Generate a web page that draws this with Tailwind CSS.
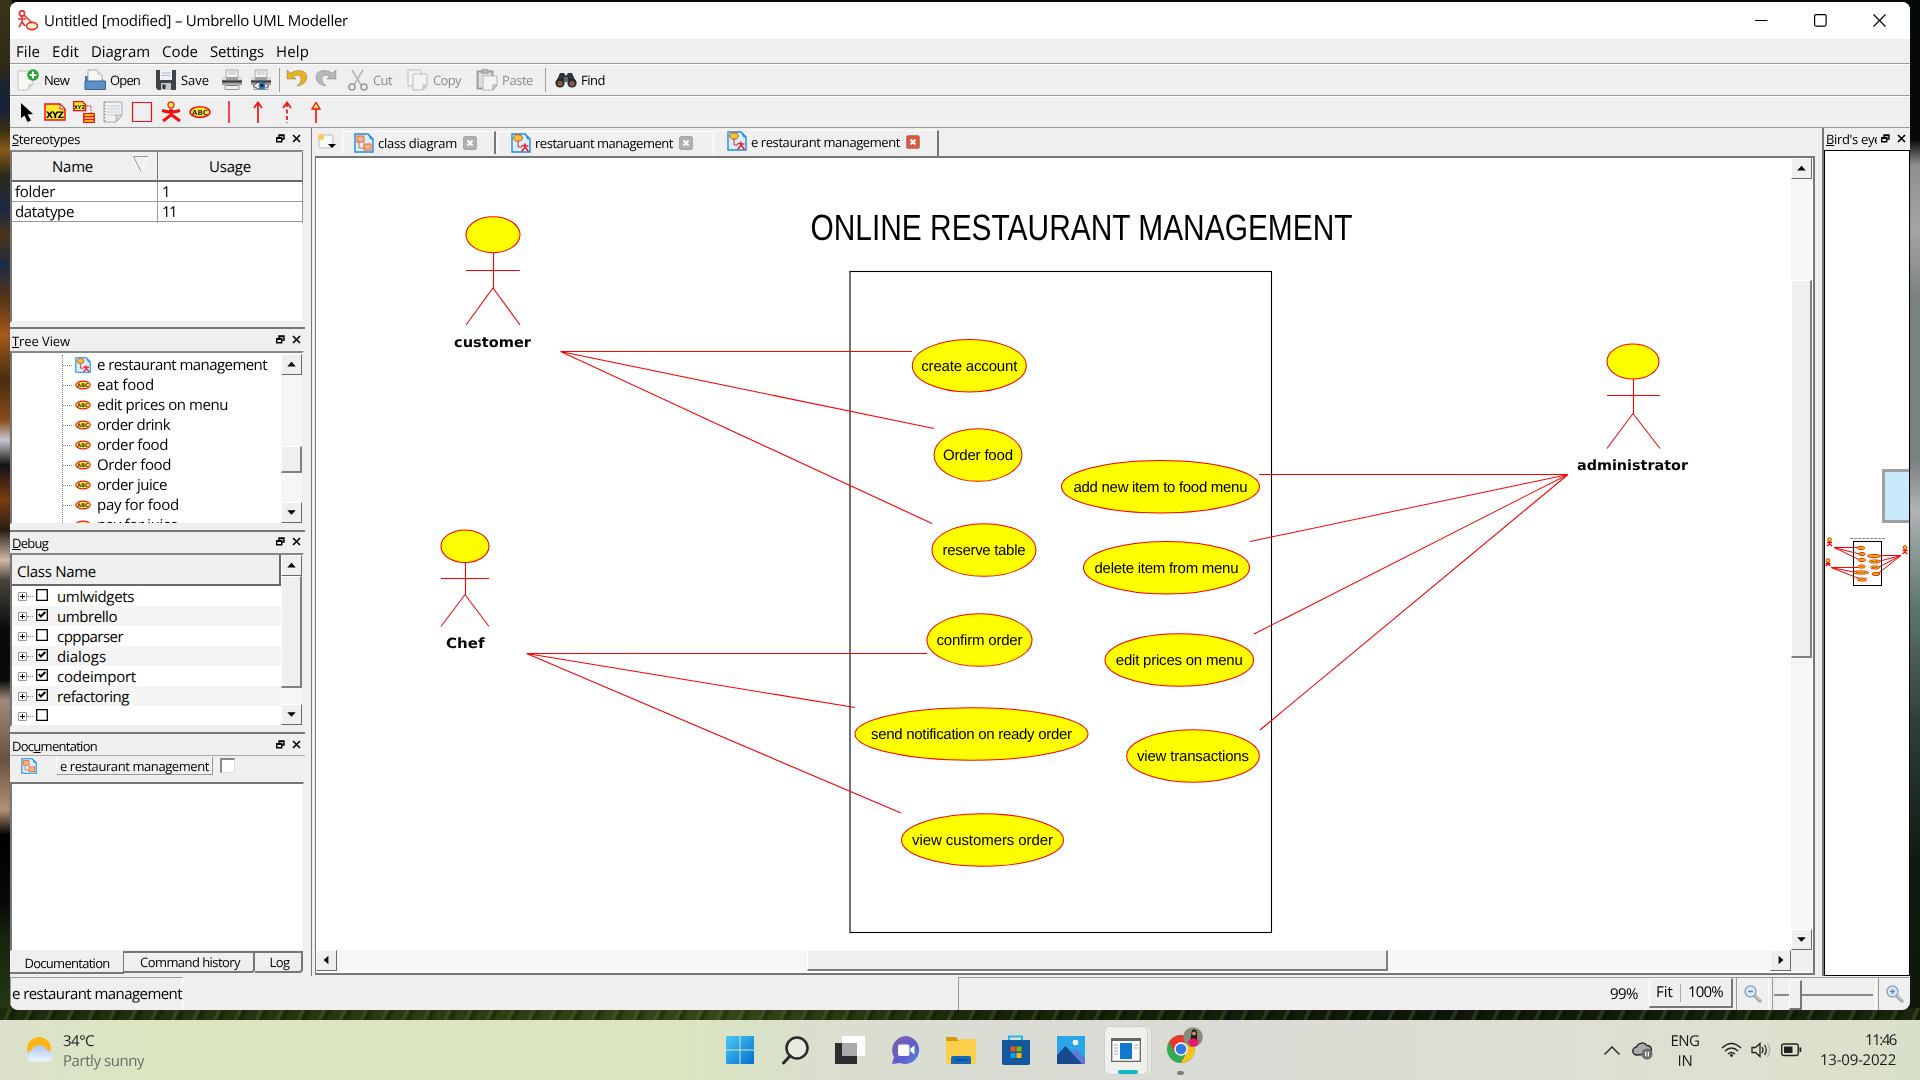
<!DOCTYPE html>
<html lang="en">
<head>
<meta charset="utf-8">
<title>Umbrello UML Modeller</title>
<script src="https://cdn.jsdelivr.net/npm/@tailwindcss/browser@4"></script>
</head>
<body class="w-[1920px] h-[1080px] overflow-hidden flex flex-col font-['Open_Sans','Noto_Sans',sans-serif] text-black text-[15px] leading-5 whitespace-nowrap bg-[#06090a] [text-rendering:geometricPrecision]">

<svg class="hidden">
  <defs>
    <symbol id="abc" viewBox="0 0 22 16"><ellipse cx="11" cy="8" rx="10" ry="5.3" fill="#ffe92e" stroke="#f01818" stroke-width="1.5"/><text x="11" y="10.6" font-size="7" font-weight="bold" text-anchor="middle" font-family="DejaVu Sans" fill="#333">ABC</text></symbol>
    <symbol id="classdoc" viewBox="0 0 20 20"><path d="M1 1h13l5 5v13H1z" fill="#d9efff" stroke="#1e8fe0" stroke-width="1.4"/><path d="M14 1l5 6-3-1z" fill="#1e8fe0"/><rect x="3" y="3" width="7" height="6" fill="#f8b48c" stroke="#e8672c"/><path d="M5 9v6h5" fill="none" stroke="#e8672c"/><rect x="10" y="11" width="7" height="6" fill="#f8b48c" stroke="#e8672c"/></symbol>
    <symbol id="usedoc" viewBox="0 0 20 20"><path d="M1 1h13l5 5v13H1z" fill="#d9efff" stroke="#1e8fe0" stroke-width="1.4"/><path d="M14 1l5 6-3-1z" fill="#1e8fe0"/><ellipse cx="7" cy="5" rx="4.3" ry="3.2" fill="#e8c838" stroke="#d94b20"/><path d="M7 8v6h4" fill="none" stroke="#e02020"/><path d="M10.500 12.500l7 .5M14 10.500v4l-3.500 4M14 14l3.500 4.500" stroke="#f02020" stroke-width="1.600" fill="none"/></symbol>
    <symbol id="float" viewBox="0 0 9 9"><path d="M3 3V1h5v4H6M3 1.500h5" fill="none" stroke="#000" stroke-width="1.400"/><path d="M.7 3.700h5v4h-5zM.7 4.300h5" fill="none" stroke="#000" stroke-width="1.400"/></symbol>
    <symbol id="x" viewBox="0 0 9 9"><path d="M1 1l7 7M8 1l-7 7" stroke="#000" stroke-width="1.600"/></symbol>
    <symbol id="up" viewBox="0 0 20 20"><path d="M5.500 12h9L10 7.200z"/></symbol>
    <symbol id="down" viewBox="0 0 20 20"><path d="M5.500 7.500h9L10 12.300z"/></symbol>
    <symbol id="tabx" viewBox="0 0 14 14"><rect x=".5" y=".5" width="13" height="13" rx="1.500" fill="currentColor" stroke="#0003"/><path d="M4.500 4.500l5 5M9.500 4.500l-5 5" stroke="#fff" stroke-width="2"/></symbol>
    <symbol id="plus" viewBox="0 0 9 9"><path d="M.5.5h8v8h-8z" fill="#fff" stroke="#999"/><path d="M2 4.500h5M4.500 2v5" stroke="#000"/></symbol>
    <symbol id="off" viewBox="0 0 12 12"><path d="M.7.7h10.600v10.600H.7z" fill="#fff" stroke="#000" stroke-width="1.300"/></symbol>
    <symbol id="on" viewBox="0 0 12 12"><path d="M.7.7h10.600v10.600H.7z" fill="#fff" stroke="#000" stroke-width="1.300"/><path d="M2.800 5l2 2.500L9.300 3" fill="none" stroke="#000" stroke-width="2"/></symbol>
    <symbol id="printer" viewBox="0 0 22 22"><path d="M5 1h12v8H5z" fill="#f4f4f4" stroke="#aaa"/><path d="M7 3h8M7 5h8" stroke="#bbb"/><path d="M1 8h20v8H1z" fill="#a0a0a0"/><path d="M1 11.500h20v2H1z" fill="#3a3a3a"/><path d="M1 8h4v3H1zM17 8h4v3h-4z" fill="#d8d8d8"/><path d="M4 15h14v5.500H4z" fill="#f1f1f1" stroke="#999"/><path d="M5 16.500h12" stroke="#777"/></symbol>
    <symbol id="undo" viewBox="0 0 22 22"><path d="M1 2v9h9L7.500 8C12 6 15 8 15 11c0 3-2 5-4 7 6-1 10-4 10-9C21 3 13 0 4.500 5z" fill="currentColor" stroke="#0003"/></symbol>
    <symbol id="lens" viewBox="0 0 20 20"><path d="M11 11l6 6" stroke="#aaa" stroke-width="3.500" stroke-linecap="round"/><path d="M12 11l5 5" stroke="#ddd" stroke-width="1"/><circle cx="7.500" cy="7.500" r="5.500" fill="#dcebfa" stroke="#91a7c4" stroke-width="1.500"/></symbol>
  </defs>
</svg>

<!-- desktop wallpaper showing round the window -->
<div class="fixed inset-0 -z-10 flex justify-between bg-[#06090a]">
  <div class="w-[12px] h-full overflow-hidden bg-[linear-gradient(180deg,#3a3418_0,#2c2a16_70px,#1a2230_85px,#182236_110px,#3a3012_130px,#8a5a18_150px,#2a2a18_175px,#1c2844_210px,#4a3418_235px,#1c2a44_265px,#5a3414_300px,#a25a1c_335px,#4a2c10_380px,#8a4c18_420px,#c8c8d0_440px,#101214_465px,#7a3c10_500px,#2a1c14_530px,#d0b8a8_560px,#4a443e_580px,#080a0a_630px,#080a0a_680px,#a08a7c_700px,#6a5242_760px,#b09078_810px,#000_835px,#050805_900px,#182410_940px,#263a14_1020px)]"></div>
  <div class="w-[12px] h-full bg-[linear-gradient(180deg,#04090b_0,#06090b_140px,#8f8f8d_165px,#a4a4a2_230px,#7a8280_300px,#788280_460px,#aeb4b4_510px,#5c7470_610px,#304038_720px,#101a10_860px,#10180c_1020px)]"></div>
</div>
<div class="fixed -z-10 inset-x-0 top-[1008px] h-3 bg-[linear-gradient(90deg,#1c2a0e,#2a3a12_20%,#34481a_38%,#1a240c_52%,#10160a_75%,#1a240e)]"></div>
<div class="fixed -z-10 inset-x-0 top-[1008px] h-3 bg-[repeating-linear-gradient(115deg,#0000_0_7px,#5a7a2c55_9px_10px,#0005_13px,#0000_19px)]"></div>

<!-- application window -->
<div class="mt-[2px] ml-[10px] w-[1900px] h-[1008px] rounded-lg overflow-hidden bg-[#efefef] flex flex-col shrink-0 shadow-[0_0_1px_#444]">
  <header class="h-[37px] bg-white flex items-center shrink-0">
    <svg class="ml-2 w-[21px] h-[21px]" viewBox="0 0 21 21" fill="none" stroke="#f03028" stroke-width="1.600"><circle cx="4" cy="3.500" r="2.600"/><path d="M4 6v6M0 9h8M4 12l-3 5M4 12l3 4M6 5l8 8" /><ellipse cx="14" cy="16" rx="5.500" ry="3.600" fill="#fff6d0"/></svg>
    <span class="ml-[5px]" data-w="304">Untitled [modified] – Umbrello UML Modeller</span>
    <div class="ml-auto mr-[24px] flex items-center gap-[46px]">
      <svg class="w-[13px] h-[13px]" viewBox="0 0 13 13"><path d="M0 6.500h12.500" stroke="#000"/></svg>
      <svg class="w-[13px] h-[13px]" viewBox="0 0 13 13"><rect x=".6" y=".6" width="11.500" height="11.500" rx="1.500" fill="none" stroke="#000" stroke-width="1.200"/></svg>
      <svg class="w-[13px] h-[13px]" viewBox="0 0 13 13"><path d="M.5.5l12 12M12.500.5l-12 12" stroke="#000" stroke-width="1.200"/></svg>
    </div>
  </header>

  <nav class="h-[25px] pl-[6px] pt-[3px] flex gap-3 border-b border-[#9a9a9a] shrink-0">
    <span data-w="24">File</span><span data-w="27">Edit</span><span data-w="59">Diagram</span><span data-w="36">Code</span><span data-w="54">Settings</span><span data-w="33">Help</span>
  </nav>

  <div class="h-8 flex items-center border-t border-t-white border-b border-b-[#9a9a9a] text-[13px] shrink-0">
    <svg class="ml-[7px] w-[22px] h-[22px]" viewBox="0 0 22 22"><path d="M1 2h15v13l-5 6H1z" fill="#f6f6f4" stroke="#c4c4c0"/><path d="M11 21c0-3 0-5 1-6h4z" fill="#ccc"/><circle cx="16" cy="6" r="5.800" fill="#22a62c"/><path d="M16 2.500v7M12.500 6h7" stroke="#fff" stroke-width="2.200"/></svg>
    <span class="ml-[5px]" data-w="25">New</span>
    <svg class="ml-[15px] w-[22px] h-[22px]" viewBox="0 0 22 22"><path d="M1 7h6l2 3h10v9H1z" fill="#48719f"/><path d="M4 1h9l5 5v9H4z" fill="#f6f6f6" stroke="#aaa"/><path d="M13 1v5h5z" fill="#ddd"/><path d="M1 12h20.500v8.500H1z" fill="#5e8fc7" stroke="#3a659c"/></svg>
    <span class="ml-1" data-w="30">Open</span>
    <svg class="ml-[15px] w-[22px] h-[22px]" viewBox="0 0 22 22"><path d="M1 1h20v20H3l-2-2z" fill="#3f4347"/><path d="M5 1h12v10H5z" fill="#eef2f6"/><path d="M6.500 4h9M6.500 6.500h9" stroke="#a9bac8"/><path d="M6 14h10v7H6z" fill="#c8c8c8"/><path d="M7.500 15.500h3V20h-3z" fill="#333"/></svg>
    <span class="ml-[4px]" data-w="28">Save</span>
    <svg class="ml-[12px] w-[22px] h-[22px]"><use href="#printer"/></svg>
    <svg class="ml-[7px] w-[22px] h-[22px]" viewBox="0 0 22 22"><use href="#printer"/><path d="M3 17q8-8 16 0q-8 6-16 0" fill="#fff" stroke="#557"/><circle cx="12" cy="16.500" r="3.400" fill="#2c72b4"/><circle cx="12" cy="16.500" r="1.400" fill="#012"/></svg>
    <span class="ml-[7px] w-px h-6 bg-[#a0a0a0]"></span>
    <svg class="ml-[6px] w-[22px] h-[22px] -mt-[3px] text-[#e6b422]"><use href="#undo"/></svg>
    <svg class="ml-[7px] w-[22px] h-[22px] -mt-[3px] text-[#b9b9b9] -scale-x-100"><use href="#undo"/></svg>
    <svg class="ml-[10px] w-[22px] h-[22px]" viewBox="0 0 22 22" fill="none" stroke="#999"><path d="M5 1l9 15M16 1L7 16" stroke="#bcbcbc" stroke-width="2"/><circle cx="5" cy="18" r="3" stroke-width="1.600"/><circle cx="17" cy="18" r="3" stroke-width="1.600"/></svg>
    <span class="ml-[4px] text-[#8c8c8c]" data-w="19">Cut</span>
    <svg class="ml-[15px] w-[22px] h-[22px]" viewBox="0 0 22 22" fill="#f3f3f3" stroke="#bdbdbd"><path d="M1 1h13v16H1z"/><path d="M6 5h14v11l-4 5H6z"/><path d="M16 21v-5h4z" fill="#ddd"/></svg>
    <span class="ml-[4px] text-[#8c8c8c]" data-w="28">Copy</span>
    <svg class="ml-[15px] w-[22px] h-[22px]" viewBox="0 0 22 22" fill="#f3f3f3" stroke="#9c9c9c"><path d="M1.500 2.500h15v17h-15z" stroke-width="2" fill="#ddd"/><path d="M6 .7h6v3.500H6z" fill="#bbb"/><path d="M7 7h14v9l-4 5H7z" stroke="#bbb"/><path d="M17 21v-5h4z" fill="#ddd"/></svg>
    <span class="ml-[4px] text-[#8c8c8c]" data-w="31">Paste</span>
    <span class="ml-[12px] w-px h-6 bg-[#a0a0a0]"></span>
    <svg class="ml-[9px] w-[22px] h-[22px]" viewBox="0 0 22 22"><path d="M5 4h4l2 3 2-3h4l4 9H1z" fill="#33373b"/><circle cx="5" cy="14" r="4.600" fill="#2a2a2a"/><circle cx="17" cy="14" r="4.600" fill="#2a2a2a"/><circle cx="5" cy="14.500" r="2.600" fill="#8b5a48"/><circle cx="17" cy="14.500" r="2.600" fill="#8b5a48"/><path d="M9 8h4v5H9z" fill="#666"/></svg>
    <span class="ml-[4px]" data-w="24">Find</span>
  </div>

  <div class="h-8 pl-[5px] flex items-center gap-[7px] border-t border-t-white border-b border-b-[#9a9a9a] shrink-0">
    <svg class="w-[22px] h-[22px]" viewBox="0 0 22 22"><path d="M6 2l12 11-5.500.5 3.500 6-3.500 1.500-3-6.500L6 17z"/></svg>
    <svg class="w-[22px] h-[22px]" viewBox="0 0 22 22"><path d="M1 3h15l5 5v11H1z" fill="#ffe930" stroke="#f01010" stroke-width="1.500"/><path d="M16 3l5 5h-5z" fill="#fff" stroke="#f01010"/><text x="11" y="17" font-size="9" font-weight="bold" text-anchor="middle" textLength="18" font-family="DejaVu Sans">XYZ</text></svg>
    <svg class="w-[22px] h-[22px]" viewBox="0 0 22 22"><path d="M.7.7h9l3 3v6h-12z" fill="#ffe930" stroke="#f01010" stroke-width="1.300"/><text x="6.500" y="8" font-size="5" font-weight="bold" text-anchor="middle" font-family="DejaVu Sans">XYZ</text><path d="M14 5h4v7" fill="none" stroke="#f01010" stroke-dasharray="1.500 1"/><path d="M10.700 12.700h10.600v8.600H10.700zM10.700 15.500h10.600M10.700 18.500h10.600" fill="#ffe930" stroke="#f01010" stroke-width="1.300"/></svg>
    <svg class="w-[22px] h-[22px]" viewBox="0 0 22 22"><path d="M2 1h18v13l-6 7H2z" fill="#f1f1f1" stroke="#9aa8b4"/><path d="M5 5h13M5 8h13M5 11h13M5 14h9" stroke="#c4d0dc"/><path d="M14 21c1-3 0-5-.5-7H20z" fill="#ddd" stroke="#aaa"/><path d="M3 1v20" stroke="#777" stroke-dasharray="1 2"/></svg>
    <svg class="w-[22px] h-[22px]" viewBox="0 0 22 22"><path d="M1.500 1.500h19v19h-19z" fill="none" stroke="#f01010" stroke-width="1.200"/></svg>
    <svg class="w-[22px] h-[22px]" viewBox="0 0 22 22"><path d="M2 9.500q9 3 18 0M11 8v6L3 20M11 13.500L20 20" fill="none" stroke="#f01010" stroke-width="3"/><circle cx="11" cy="4" r="3" fill="#ffe95a" stroke="#f04010" stroke-width="1.400"/></svg>
    <svg class="w-[22px] h-[16px]"><use href="#abc"/></svg>
    <svg class="w-[22px] h-[22px]" viewBox="0 0 22 22"><path d="M11 0v22" stroke="#f01010" stroke-width="1.500"/></svg>
    <svg class="w-[22px] h-[22px]" viewBox="0 0 22 22" fill="none" stroke="#f01010" stroke-width="1.700"><path d="M11 1v21M7 7l4-5.500L15 7"/></svg>
    <svg class="w-[22px] h-[22px]" viewBox="0 0 22 22" fill="none" stroke="#f01010" stroke-width="1.700"><path d="M11 2v20" stroke-dasharray="4 2.500"/><path d="M7 7l4-5.500L15 7"/></svg>
    <svg class="w-[22px] h-[22px]" viewBox="0 0 22 22" stroke="#f01010" stroke-width="1.600"><path d="M11 8v14"/><path d="M7 8l4-6.500L15 8z" fill="#ffe95a" stroke-width="1.300"/></svg>
  </div>

  <main class="flex h-[848px] shrink-0">
    <!-- left docks -->
    <aside class="w-[295px] shrink-0 text-[15px]">
      <div class="h-[22px] pr-[4px] pb-[2px] flex items-center text-[13px]"><span class="ml-[2px] mt-[2px]" data-w="68"><u>S</u>tereotypes</span><svg class="ml-auto w-[9px] h-[9px]"><use href="#float"/></svg><svg class="ml-[7px] w-[9px] h-[9px]"><use href="#x"/></svg></div>
      <div class="h-[173px] w-[294px] bg-white border-t-2 border-t-[#888] border-l-2 border-l-[#777] border-r-2 border-r-[#efefef] border-b-2 border-b-[#efefef]">
        <div class="grid grid-cols-[146px_145px] h-[30px] bg-[#efefef] border-b-2 border-[#696969] text-center leading-[31px] relative">
          <div class="border-r border-[#777]"><span class="-ml-6" data-w="41">Name</span></div>
          <div class="border-r border-[#777]"><span data-w="42">Usage</span></div>
          <svg class="absolute left-[121px] top-[4px] w-4 h-4" viewBox="0 0 16 16"><path d="M15.500.5H.5L8 15.500" fill="none" stroke="#999"/><path d="M15.500.5L8 15.500" stroke="#fff"/></svg>
        </div>
        <div class="grid grid-cols-[146px_145px] h-5 border-b border-[#999] leading-[21px]"><div class="pl-[3px] border-r border-[#999]"><span data-w="40">folder</span></div><div class="pl-1 border-r border-[#999]">1</div></div>
        <div class="grid grid-cols-[146px_145px] h-5 border-b border-[#999] leading-[21px]"><div class="pl-[3px] border-r border-[#999]"><span data-w="59">datatype</span></div><div class="pl-1 border-r border-[#999]"><span data-w="14">11</span></div></div>
      </div>

      <div class="h-[30px] mt-[4px]"><div class="flex items-center h-[26px] mt-[2px] border-t-2 border-[#777] pr-[4px] pb-[3px] text-[13px]"><span class="ml-[2px] mt-[2px]" data-w="58"><u>T</u>ree View</span><svg class="ml-auto w-[9px] h-[9px]"><use href="#float"/></svg><svg class="ml-[7px] w-[9px] h-[9px]"><use href="#x"/></svg></div></div>
      <div class="-mt-[6px] h-[173px] w-[294px] bg-white border-t-2 border-t-[#888] border-l-2 border-l-[#777] border-r-2 border-r-[#efefef] border-b border-b-[#efefef] flex overflow-hidden">
        <div class="grow pl-[50px] pt-[2px]"><div id="tree" class="border-l border-dotted border-[#888]"></div></div>
        <div class="w-[21px] shrink-0 flex flex-col bg-[#f6f6f6] pt-[1px]">
          <svg class="w-[21px] h-[21px] shrink-0 bg-[#efefef] border border-white border-r-[#696969] border-b-[#696969]"><use href="#up"/></svg>
          <div class="mt-[71px] h-[27px] bg-[#efefef] border border-white border-r-2 border-b-2 border-r-[#808080] border-b-[#808080]"></div>
          <svg class="mt-auto w-[21px] h-[21px] shrink-0 bg-[#efefef] border border-white border-r-[#696969] border-b-[#696969]"><use href="#down"/></svg>
        </div>
      </div>

      <div class="flex items-center mt-[6px] h-[23px] border-t-2 border-[#777] pr-[4px] pb-[2px] text-[13px]"><span class="ml-[2px] mt-[3px]" data-w="36"><u>D</u>ebug</span><svg class="ml-auto w-[9px] h-[9px]"><use href="#float"/></svg><svg class="ml-[7px] w-[9px] h-[9px]"><use href="#x"/></svg></div>
      <div class="h-[174px] w-[294px] bg-white border-t-2 border-t-[#888] border-l-2 border-l-[#777] border-r-2 border-r-[#efefef] border-b-2 border-b-[#efefef] flex overflow-hidden">
        <div class="grow"><div class="h-[31px] bg-[#efefef] border-b-2 border-r-2 border-[#696969] pl-[5px] leading-[34px]"><span data-w="79">Class Name</span></div><div id="debug"></div></div>
        <div class="w-[21px] shrink-0 flex flex-col bg-[#f6f6f6]">
          <svg class="w-[21px] h-[21px] shrink-0 bg-[#efefef] border border-white border-r-[#696969] border-b-[#696969]"><use href="#up"/></svg>
          <div class="h-[112px] bg-[#efefef] border border-white border-r-2 border-b-2 border-r-[#808080] border-b-[#808080]"></div>
          <svg class="mt-auto w-[21px] h-[21px] shrink-0 bg-[#efefef] border border-white border-r-[#696969] border-b-[#696969]"><use href="#down"/></svg>
        </div>
      </div>

      <div class="flex items-center mt-[5px] h-[24px] border-t-2 border-[#777] border-b border-b-[#aaa] pr-[4px] text-[13px]"><span class="ml-[2px] mt-[3px]" data-w="85">Doc<u>u</u>mentation</span><svg class="ml-auto w-[9px] h-[9px]"><use href="#float"/></svg><svg class="ml-[7px] w-[9px] h-[9px]"><use href="#x"/></svg></div>
      <div class="h-[26px] pt-[1px] flex items-start text-[13px]"><svg class="ml-[11px] mt-[1px] w-4 h-4"><use href="#classdoc"/></svg><div class="ml-[19px] w-[157px] h-[18px] border-r border-b border-[#999] border-l border-l-white pl-[3px] leading-[18px]"><span data-w="149">e restaurant management</span></div><div class="ml-[7px] mt-[1px] w-[15px] h-[15px] bg-white border-t-2 border-l-2 border-[#888] border-r border-r-[#ddd] border-b border-b-[#ddd]"></div></div>
      <div class="h-[169px] w-[294px] bg-white border-t-2 border-l-2 border-t-[#777] border-l-[#777] border-r border-r-[#efefef] border-b border-b-[#efefef]"></div>
      <div class="flex items-start h-[24px] text-[13px] text-center"><div class="w-[114px] h-[23px] border-b-2 border-r border-[#777] leading-[24px] pl-[1px]"><span data-w="85">Documentation</span></div><div class="w-[131px] h-[22px] border-2 border-l-0 border-[#777] leading-[19px] rounded-br pl-[3px]"><span data-w="100">Command history</span></div><div class="w-[48px] h-[22px] border-2 border-l-0 border-[#777] leading-[19px] rounded-br pl-[3px]"><span data-w="20">Log</span></div></div>
    </aside>

    <!-- diagram area -->
    <section class="ml-[6px] w-[1506px] shrink-0 border-l border-[#777] flex flex-col">
      <div class="h-[28px] pt-[3px] flex items-start text-[13px]">
        <svg class="ml-[5px] mt-[2px] w-[20px] h-[18px]" viewBox="0 0 20 18"><rect x="2" y="2" width="14" height="13" rx="2" fill="#f8f8f8" stroke="#bbb"/><circle cx="4" cy="4" r="3" fill="#f4cf4a"/><path d="M11 11h8l-4 4z"/></svg>
        <div class="ml-[5px] w-[154px] h-[23px] flex items-center pl-[11px] border-l border-t border-white border-r-2 border-r-[#777]"><svg class="w-5 h-5"><use href="#classdoc"/></svg><span class="ml-[4px]" data-w="79">class diagram</span><svg class="ml-[6px] w-[14px] h-[14px] text-[#b0b0b0]"><use href="#tabx"/></svg></div>
        <div class="ml-[1px] w-[216px] h-[23px] flex items-center pl-[13px] border-l border-t border-white"><svg class="w-5 h-5"><use href="#usedoc"/></svg><span class="ml-[4px]" data-w="138">restaruant management</span><svg class="ml-[6px] w-[14px] h-[14px] text-[#b0b0b0]"><use href="#tabx"/></svg></div>
        <div class="-mt-[1px] w-[226px] h-[26px] flex items-start pl-[13px] border-l border-t border-white border-r-2 border-r-[#777]"><svg class="w-5 h-5"><use href="#usedoc"/></svg><span class="ml-[4px] mt-[1px]" data-w="149">e restaurant management</span><svg class="ml-[6px] mt-1 w-[14px] h-[14px] text-[#e0563c]"><use href="#tabx"/></svg></div>
      </div>
      <div class="h-[819px] ml-[3px] mr-[2px] border-2 border-[#777] border-l-[1.5px] bg-white flex flex-col">
        <div class="flex h-[792px]">
          <svg id="canvas" class="w-[1476px] h-[792px] shrink-0 font-['Liberation_Sans',Arial,sans-serif]" viewBox="316 158 1476 792">
            <rect x="850" y="271.500" width="421.500" height="661" fill="none" stroke="#000" stroke-width="1.100"/>
            <g stroke="#ff0000" stroke-width="1.050" fill="none">
              <path d="M560.500 351.500H912M560.500 351.500L934 428.500M560.500 351.500L932 523.500M526.500 653.500H927M526.500 653.500L855 707.500M526.500 653.500L901 813M1568 474.500H1259M1568 474.500L1250 541.500M1568 474.500L1254 634M1568 474.500L1260 730"/>
              <path d="M493.500 253v35M466 270.500h54M466 325l27-37 27 37M465.500 562v32.500M441 578.500h48M441 626.500l24-32 24 32M1633.500 379v35M1607 395.500h53M1607 448.500l26-35 27 35"/>
            </g>
            <g stroke="#ff0000" stroke-width="1.050" fill="#ffff00"><ellipse cx="493" cy="234.700" rx="27" ry="18"/><ellipse cx="465" cy="546.200" rx="24" ry="16.300"/><ellipse cx="1633" cy="361.500" rx="26" ry="17.500"/></g>
            <text x="810.500" y="240" font-size="36.500" textLength="542" lengthAdjust="spacingAndGlyphs">ONLINE RESTAURANT MANAGEMENT</text>
            <g font-weight="bold" font-size="14" font-family="Arial Black, DejaVu Sans, sans-serif">
              <text x="454" y="347" textLength="77" lengthAdjust="spacingAndGlyphs">customer</text>
              <text x="446" y="647.500" textLength="38.500" lengthAdjust="spacingAndGlyphs">Chef</text>
              <text x="1577" y="470" textLength="111" lengthAdjust="spacingAndGlyphs">administrator</text>
            </g>
          </svg>
          <div class="w-[21px] -ml-[1px] shrink-0 flex flex-col bg-[#f6f6f6]">
            <svg class="w-[21px] h-[21px] shrink-0 bg-[#efefef] border border-white border-r-[#696969] border-b-[#696969]"><use href="#up"/></svg>
            <div class="mt-[101px] h-[378px] bg-[#efefef] border border-white border-r-2 border-b-2 border-r-[#808080] border-b-[#808080]"></div>
            <svg class="mt-auto w-[21px] h-[21px] shrink-0 bg-[#efefef] border border-white border-r-[#696969] border-b-[#696969]"><use href="#down"/></svg>
          </div>
        </div>
        <div class="flex h-[21px] bg-[#efefef]"><div class="w-[1475px] h-[21px] flex bg-[#f6f6f6]">
          <svg class="w-[21px] h-[21px] shrink-0 bg-[#efefef] border border-white border-r-[#696969] border-b-[#696969]" viewBox="0 0 20 20"><path d="M12 5v9L7 9.500z"/></svg>
          <div class="ml-[470px] w-[581px] bg-[#efefef] border border-white border-r-2 border-b-2 border-r-[#808080] border-b-[#808080]"></div>
          <svg class="ml-auto w-[21px] h-[21px] shrink-0 bg-[#efefef] border border-white border-r-[#696969] border-b-[#696969]" viewBox="0 0 20 20"><path d="M8 5v9l5-4.500z"/></svg>
        </div></div>
      </div>
    </section>

    <!-- overview dock -->
    <aside class="ml-[5px] w-[88px] shrink-0 border-l-2 border-[#777] flex flex-col">
      <div class="h-[22px] pb-[2px] flex items-center text-[13px]"><div class="ml-[2px] mt-[2px] w-[51px] overflow-hidden"><span data-w="55"><u>B</u>ird's eye</span></div><svg class="ml-[4px] w-[9px] h-[9px]"><use href="#float"/></svg><svg class="ml-[7px] w-[9px] h-[9px]"><use href="#x"/></svg></div>
      <div class="grow bg-white border border-black">
        <svg id="mini" class="w-[84px] h-[823px]" viewBox="1825 151 84 823">
          <rect x="1883.500" y="470.500" width="40" height="51" fill="#c8eafa" stroke="#a0a0a0" stroke-width="3"/>
          <path d="M1850 538.500h36" stroke="#889" stroke-dasharray="3 1"/>
          <rect x="1853.500" y="541.500" width="28" height="44" fill="none" stroke="#000"/>
          <g fill="none" stroke="#f00" stroke-width="1"><path d="M1834 547.500h27M1834 547.500l27 7M1834 547.500l27 13M1831 567.500h27M1831 567.500l25 5M1831 567.500l28 11M1901 555.500h-24M1901 555.500l-23 6M1901 555.500l-23 12M1901 555.500l-23 18"/>
          <path d="M1829.500 541v3M1827 546l2.500-2 2.500 2M1827 542.500h5M1828 562v3M1825.500 566l2.500-2 2.500 2M1825.500 563.500h5M1905 549v3M1902.500 554l2.500-2 2.500 2M1902.500 550.500h5" stroke-width="1.300"/></g>
          <g fill="#ff0" stroke="#f00" stroke-width=".9"><circle cx="1829.500" cy="539.500" r="1.800"/><circle cx="1828" cy="560.500" r="1.800"/><circle cx="1905" cy="547.500" r="1.800"/><ellipse cx="1861" cy="548" rx="3.600" ry="1.600"/><ellipse cx="1862" cy="554" rx="3" ry="1.600"/><ellipse cx="1862" cy="560" rx="3.600" ry="1.600"/><ellipse cx="1861.500" cy="566.500" rx="3.600" ry="1.600"/><ellipse cx="1861" cy="572.500" rx="7.500" ry="1.600"/><ellipse cx="1862" cy="579.500" rx="5" ry="1.600"/><ellipse cx="1874" cy="556" rx="6.500" ry="1.600"/><ellipse cx="1874.500" cy="561.500" rx="5.500" ry="1.600"/><ellipse cx="1875" cy="567.500" rx="4.500" ry="1.600"/><ellipse cx="1876" cy="574" rx="4" ry="1.600"/></g>
          <path d="M1859 548h4M1860 554h4M1860 560h4M1859.500 566.500h4M1856 572.500h10M1859 579.500h6M1870 556h8M1871 561.500h7M1872 567.500h6M1873 574h6" stroke="#660" stroke-width=".7"/>
        </svg>
      </div>
    </aside>
  </main>

  <footer class="flex grow pt-[1px] border-b-2 border-white">
    <div class="w-[173px] border-t border-l border-[#999] border-r border-r-white pl-[1px] leading-[33px]"><span data-w="170">e restaurant management</span></div>
    <div class="ml-[775px] grow border-t border-l border-[#999] flex">
      <div class="ml-auto flex leading-[33px]"><span data-w="28">99%</span>
        <div class="ml-[11px] w-[84px] h-[30px] border border-white border-r-2 border-b-2 border-r-[#777] border-b-[#777] flex items-center"><span class="ml-[6px]" data-w="17">Fit</span><span class="ml-[7px] w-px h-[18px] bg-[#aaa]"></span><span class="ml-[7px]" data-w="35">100%</span></div>
      </div>
      <div class="ml-[3px] w-[33px] border-l border-[#999] border-r border-r-white pl-[6px] pt-[6px]"><svg class="w-5 h-5" viewBox="0 0 20 20"><use href="#lens"/><path d="M5 7.500h5" stroke="#6784aa" stroke-width="1.500"/></svg></div>
      <div class="ml-[3px] w-[104px] border-l border-[#999] border-r border-r-white flex items-center">
        <span class="ml-[1px] w-[15px] h-[2px] bg-[#888]"></span><span class="w-[13px] h-[30px] bg-[#efefef] border border-white border-r-2 border-b-2 border-r-[#777] border-b-[#777]"></span><span class="w-[71px] h-[2px] bg-[#888]"></span></div>
      <div class="ml-[2px] w-[32px] border-l border-[#999] pl-[6px] pt-[6px]"><svg class="w-5 h-5" viewBox="0 0 20 20"><use href="#lens"/><path d="M5 7.500h5M7.500 5v5" stroke="#6784aa" stroke-width="1.500"/></svg></div>
    </div>
  </footer>
</div>

<!-- taskbar -->
<div class="mt-auto h-[60px] shrink-0 flex items-center text-[#1a1a1a] bg-[linear-gradient(90deg,#dbe1cb_0,#dbe6c1_8%,#d9e6be_35%,#dadfcd_42%,#dadcd4_52%,#dadbd5_64%,#dcdfd2_80%,#dde1d0_90%,#d9e0c8)]">
  <svg class="ml-[25px] w-[30px] h-[30px]" viewBox="0 0 30 30"><defs><linearGradient id="cl" x1="0" y1="0" x2="0" y2="1"><stop stop-color="#a8c8f4"/><stop offset="1" stop-color="#f0f4fc"/></linearGradient></defs><circle cx="14" cy="14" r="12" fill="#fdb515"/><path d="M7 26.500a5.500 5.500 0 010-11 8 8 0 0115 0 5.500 5.500 0 011 11z" fill="url(#cl)"/></svg>
  <div class="ml-[8px] leading-5 mt-[1px] w-[82px]"><div><span data-w="31">34°C</span></div><div class="text-[#686c60]"><span data-w="81">Partly sunny</span></div></div>
  <div class="ml-[580px] flex items-center">
    <svg class="w-[30px] h-[30px]" viewBox="0 0 30 30"><defs><linearGradient id="w" x1="0" y1="0" x2="1" y2="1"><stop stop-color="#4cc8f8"/><stop offset="1" stop-color="#0070d0"/></linearGradient></defs><path d="M1 1h13.500v13.500H1zM15.500 1H29v13.500H15.500zM1 15.500h13.500V29H1zM15.500 15.500H29V29H15.500z" fill="url(#w)"/></svg>
    <svg class="ml-[26px] w-[28px] h-[30px]" viewBox="0 0 28 30"><circle cx="16" cy="13" r="10.500" fill="#e8eadf" stroke="#2b2b2b" stroke-width="2.500"/><path d="M9 21l-6.500 7" stroke="#2b2b2b" stroke-width="3" stroke-linecap="round"/></svg>
    <svg class="ml-[26px] w-[30px] h-[30px]" viewBox="0 0 30 30"><path d="M0 8h22v21H0z" fill="#2d2d2d"/><path d="M7 1h23v20H7z" fill="#fff" fill-opacity=".93"/><path d="M7 8h15v13H7z" fill="#aaa"/></svg>
    <svg class="ml-[26px] w-[30px] h-[30px]" viewBox="0 0 30 30"><defs><linearGradient id="ch" x1="0" y1="0" x2="1" y2="1"><stop stop-color="#8a5ca8"/><stop offset=".6" stop-color="#5c5fd0"/><stop offset="1" stop-color="#5b8ce8"/></linearGradient></defs><path d="M15 1a14 14 0 11-6 27l-8 1 2-7A14 14 0 0115 1z" fill="url(#ch)"/><rect x="7" y="9.500" width="11.500" height="11.500" rx="2" fill="#fff"/><path d="M19.500 13.500l4-3v9l-4-3z" fill="#fff"/></svg>
    <svg class="ml-[25px] w-[30px] h-[30px]" viewBox="0 0 30 30"><path d="M0 2h10l3 4H0z" fill="#d89a00"/><path d="M0 6h12l2-2h16v25H0z" fill="#fdd04c"/><path d="M5 29v-6q0-2 2-2h16q2 0 2 2v6z" fill="#1668b8"/><path d="M9 25h12" stroke="#0b4a8c" stroke-width="1.500"/></svg>
    <svg class="ml-[25px] w-[30px] h-[32px]" viewBox="0 0 30 32"><path d="M8 7V2.500h13V7" fill="none" stroke="#28b8e8" stroke-width="2"/><path d="M1 6h28v23q0 2-2 2H3q-2 0-2-2z" fill="#15579c"/><path d="M9.500 12.500h5v5h-5z" fill="#f25022"/><path d="M15.500 12.500h5v5h-5z" fill="#7fba00"/><path d="M9.500 19h5v5h-5z" fill="#00a4ef"/><path d="M15.500 19h5v5h-5z" fill="#ffb900"/></svg>
    <svg class="ml-[25px] w-[30px] h-[30px]" viewBox="0 0 30 30"><path d="M1 1h28v28H1z" fill="#2aa6e6"/><path d="M13 20l6-6 10 9v6H13z" fill="#5c78d8"/><path d="M1 20l8.500-9L26 29H1z" fill="#174a8c"/><circle cx="19.500" cy="7.500" r="2.800" fill="#fff"/></svg>
    <div class="ml-[18px] relative w-[44px] h-[49px] rounded-md bg-[#f0f1ec] border border-[#d0d1cb] shadow-[4px_0_0_-1px_#e8e9e3,5px_0_0_-1px_#cfd0ca] flex items-center justify-center">
      <svg class="w-[30px] h-[24px]" viewBox="0 0 30 24"><path d="M.7.7h28.600v22.600H.7z" fill="#fafafa" stroke="#666" stroke-width="1.300"/><path d="M0 0h30v3H0z" fill="#666"/><path d="M9 5h12v16H9z" fill="#0f78d0"/><path d="M3 7h4M3 10h4M3 13h4M3 16h4M23 7h4M23 10h4" stroke="#aaa"/></svg>
      <div class="absolute bottom-0 left-[13px] w-5 h-1 rounded bg-[#10b8c8]"></div>
    </div>
    <div class="relative ml-[19px] w-[36px] h-[50px]">
      <svg class="absolute left-0 top-[10px] w-[28px] h-[28px]" viewBox="0 0 28 28"><circle cx="14" cy="14" r="14" fill="#34a853"/><path d="M1.900 7A14 14 0 0126.100 7L14 14z" fill="#e8392c"/><path d="M26.100 7A14 14 0 0114 28l6-11-6-9h12z" fill="#fcc31c"/><path d="M1.900 7l6 10.500L14 8z" fill="#e8392c"/><circle cx="14" cy="14" r="6.700" fill="#fff"/><circle cx="14" cy="14" r="5.300" fill="#3478e8"/></svg>
      <svg class="absolute left-[16px] top-[2px] w-5 h-5" viewBox="0 0 20 20"><circle cx="10" cy="10" r="9.800" fill="#8a8a78"/><path d="M9 3q5-2 5 4v9H7z" fill="#241618"/><path d="M5 14l5-3 6 2-2 6-6 1z" fill="#e8186c"/><circle cx="11" cy="6.500" r="2" fill="#c89070"/></svg>
      <div class="absolute left-[10px] bottom-0 w-[7px] h-1 rounded bg-[#7c7e78]"></div>
    </div>
  </div>
  <div class="ml-auto mr-[24px] flex items-center">
    <svg class="w-4 h-[9px]" viewBox="0 0 16 9"><path d="M.5 8.500L8 1l7.500 7.500" fill="none" stroke="#222" stroke-width="1.400"/></svg>
    <svg class="ml-[12px] w-[21px] h-[19px]" viewBox="0 0 21 19"><path d="M5 14a4 4 0 01-.5-8 6 6 0 0110.500-1.500A4.500 4.500 0 0117 13z" fill="#aaa" stroke="#2a2a2a" stroke-width="1.400"/><circle cx="15" cy="13" r="5.500" fill="#6c6c6c"/><path d="M13.700 10.500v5M16.300 10.500v5" stroke="#fff" stroke-width="1.200"/></svg>
    <div class="ml-[17px] w-[30px] text-center leading-5 mt-[1px]"><div><span data-w="29">ENG</span></div><div><span data-w="15">IN</span></div></div>
    <svg class="ml-[21px] w-[21px] h-[16px]" viewBox="0 0 21 16" fill="none" stroke="#222" stroke-width="1.500"><path d="M1 6q9.500-9 19 0M4 9q6.500-6 13 0M7 12q3.500-3 7 0"/><circle cx="10.500" cy="13.500" r="1.400" fill="#222" stroke="none"/></svg>
    <svg class="ml-[9px] w-[21px] h-[16px]" viewBox="0 0 21 16" fill="none" stroke="#222" stroke-width="1.300"><path d="M1 5.500h3.500L9 1.500v13L4.500 10.500H1z"/><path d="M11 5q2 3 0 6M13.500 3q3.500 5 0 10"/><path d="M16.500 1q4.500 7 0 14" stroke="#aaa"/></svg>
    <svg class="ml-[9px] w-[21px] h-[14px]" viewBox="0 0 21 14"><rect x=".7" y="1" width="16.500" height="11.500" rx="2" fill="none" stroke="#222" stroke-width="1.400"/><path d="M3 3.500h8.500v6.500H3z" fill="#222"/><path d="M18.500 4.500h1.800v4.500h-1.800z" fill="#222"/></svg>
    <div class="ml-[18px] w-[76px] text-right leading-5"><div><span data-w="31">11:46</span></div><div><span data-w="76">13-09-2022</span></div></div>
  </div>
</div>

<script>
// tree rows
const tree = ['e restaurant management:170','eat food:57','edit prices on menu:131','order drink:73','order food:71','Order food:74','order juice:70','pay for food:82','pay for juice:81'];
document.getElementById('tree').innerHTML = tree.map((t, i) => {
  const [label, w] = t.split(':');
  return `<div class="flex items-center h-5"><span class="w-[9px] border-t border-dotted border-[#888]"></span><svg class="ml-[3px] -mt-[1px] w-4 ${i ? 'h-[12px]' : 'h-4'}"><use href="#${i ? 'abc' : 'usedoc'}"/></svg><span class="ml-[6px]" data-w="${w}">${label}</span></div>`;
}).join('');

// debug class list
const classes = [['umlwidgets',0,77],['umbrello',1,60],['cppparser',0,66],['dialogs',1,49],['codeimport',1,79],['refactoring',1,72],['',0,0]];
document.getElementById('debug').innerHTML = classes.map(([label, on, w], i) =>
  `<div class="flex items-center h-5 ${i % 2 ? 'bg-[#f5f5f5]' : 'bg-white'}"><svg class="ml-[6px] w-[9px] h-[9px]"><use href="#plus"/></svg><span class="w-[6px] border-t border-dotted border-[#888]"></span><svg class="ml-[3px] -mt-[2px] w-3 h-3"><use href="#${on ? 'on' : 'off'}"/></svg><span class="ml-[9px] mt-[2px]" data-w="${w}">${label}</span></div>`).join('');

// use cases on the canvas: label, centre x, centre y, horizontal radius, label width
const cases = [['create account',969.3,365.7,57,96],['Order food',978,455,44,70],['reserve table',984,550,52,83],['confirm order',979.5,640,52.5,86],['send notification on ready order',971.5,734,116.5,201],['view customers order',982.5,840,81,141],['add new item to food menu',1160.5,486.7,99,174],['delete item from menu',1166.5,567.7,83,144],['edit prices on menu',1179.3,660,74.3,127],['view transactions',1193,756,66.3,112]];
document.getElementById('canvas').insertAdjacentHTML('beforeend', cases.map(([label, x, y, r, w]) =>
  `<ellipse cx="${x}" cy="${y}" rx="${r}" ry="26.300" fill="#ffff00" stroke="#ff0000" stroke-width="1.050"/><text x="${x - w / 2}" y="${y + 5}" font-size="15" textLength="${w}">${label}</text>`
).join(''));

// set each label to its nominal width
function fitLabels() {
  document.querySelectorAll('[data-w]').forEach(el => {
    const n = el.textContent.length, target = +el.dataset.w;
    if (!n || !target) return;
    el.style.letterSpacing = '0px';
    el.style.letterSpacing = ((target - el.getBoundingClientRect().width) / n) + 'px';
  });
}
addEventListener('load', () => { fitLabels(); requestAnimationFrame(fitLabels); setTimeout(fitLabels, 100); });
</script>
</body>
</html>
